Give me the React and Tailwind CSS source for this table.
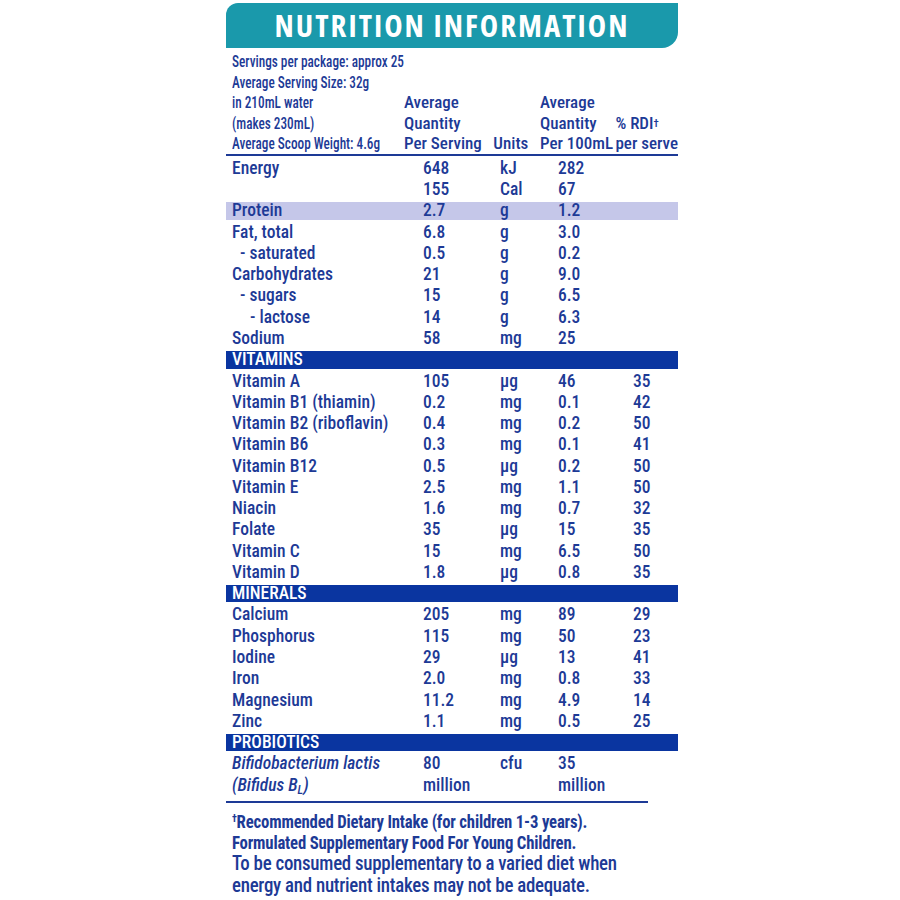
const rows1 = [
  ['Energy', '648', 'kJ', '282', ''],
  ['', '155', 'Cal', '67', ''],
  ['Protein', '2.7', 'g', '1.2', '', 'hl'],
  ['Fat, total', '6.8', 'g', '3.0', ''],
  ['- saturated', '0.5', 'g', '0.2', '', 1],
  ['Carbohydrates', '21', 'g', '9.0', ''],
  ['- sugars', '15', 'g', '6.5', '', 1],
  ['- lactose', '14', 'g', '6.3', '', 2],
  ['Sodium', '58', 'mg', '25', ''],
]

const vitamins = [
  ['Vitamin A', '105', 'µg', '46', '35'],
  ['Vitamin B1 (thiamin)', '0.2', 'mg', '0.1', '42'],
  ['Vitamin B2 (riboflavin)', '0.4', 'mg', '0.2', '50'],
  ['Vitamin B6', '0.3', 'mg', '0.1', '41'],
  ['Vitamin B12', '0.5', 'µg', '0.2', '50'],
  ['Vitamin E', '2.5', 'mg', '1.1', '50'],
  ['Niacin', '1.6', 'mg', '0.7', '32'],
  ['Folate', '35', 'µg', '15', '35'],
  ['Vitamin C', '15', 'mg', '6.5', '50'],
  ['Vitamin D', '1.8', 'µg', '0.8', '35'],
]

const minerals = [
  ['Calcium', '205', 'mg', '89', '29'],
  ['Phosphorus', '115', 'mg', '50', '23'],
  ['Iodine', '29', 'µg', '13', '41'],
  ['Iron', '2.0', 'mg', '0.8', '33'],
  ['Magnesium', '11.2', 'mg', '4.9', '14'],
  ['Zinc', '1.1', 'mg', '0.5', '25'],
]

const cols = 'grid grid-cols-[191px_77px_58px_75px_1fr] items-center h-full pl-[6px]'

function Row({ r }) {
  const [name, serve, unit, per100, rdi, flag] = r
  const indent = flag === 1 ? 'pl-[8px]' : flag === 2 ? 'pl-[18px]' : ''
  return (
    <div className="h-[21.28px] py-[2px]">
      <div className={`${cols} ${flag === 'hl' ? 'bg-[#c5c7e9]' : ''}`}>
        <span className={indent}>{name}</span>
        <span>{serve}</span>
        <span>{unit}</span>
        <span>{per100}</span>
        <span>{rdi}</span>
      </div>
    </div>
  )
}

function Band({ label }) {
  return (
    <div className="h-[21.28px] py-[2px]">
      <div className="h-full bg-[#0a35a0] text-white flex items-center pl-[6px]">{label}</div>
    </div>
  )
}

// the serving notes are set much tighter than the rest of the panel
function Squeezed({ children }) {
  return <div className="origin-left scale-x-[0.78]">{children}</div>
}

export default function App() {
  return (
    <div className="w-[900px] h-[900px] bg-white text-[#1d3a96] overflow-hidden font-['Roboto',sans-serif] [font-stretch:80%] font-medium">
      <div className="ml-[226px] w-[452px] flex flex-col text-[17.5px] leading-none">
        <div className="mt-[3px] h-[45px] bg-[#1a99ab] rounded-tl-[12px] rounded-br-[16px] flex items-center justify-center">
          <span className="text-white font-bold text-[31px] tracking-[2px] font-['Open_Sans',sans-serif]">
            NUTRITION INFORMATION
          </span>
        </div>

        <div className="flex items-end pl-[6px] pt-[3px] text-[17px] leading-[20.5px] whitespace-nowrap">
          <div className="w-[172px]">
            <Squeezed>Servings per package: approx 25</Squeezed>
            <Squeezed>Average Serving Size: 32g</Squeezed>
            <Squeezed>in 210mL water</Squeezed>
            <Squeezed>(makes 230mL)</Squeezed>
            <Squeezed>Average Scoop Weight: 4.6g</Squeezed>
          </div>
          <div className="w-[90px]">
            <div>Average</div>
            <div>Quantity</div>
            <div>Per Serving</div>
          </div>
          <div className="w-[47px]">Units</div>
          <div className="w-[76px]">
            <div>Average</div>
            <div>Quantity</div>
            <div>Per 100mL</div>
          </div>
          <div>
            <div>
              % RDI<sup className="text-[11px] relative -top-[2px]">†</sup>
            </div>
            <div>per serve</div>
          </div>
        </div>
        <div className="h-[2px] bg-[#1d3a96]" />

        <div className="pt-[2.4px]">
          {rows1.map((r, i) => (
            <Row key={'a' + i} r={r} />
          ))}
          <Band label="VITAMINS" />
          {vitamins.map((r, i) => (
            <Row key={'v' + i} r={r} />
          ))}
          <Band label="MINERALS" />
          {minerals.map((r, i) => (
            <Row key={'m' + i} r={r} />
          ))}
          <Band label="PROBIOTICS" />
          <div className="h-[21.28px] py-[2px]">
            <div className={cols}>
              <span className="italic">Bifidobacterium lactis</span>
              <span>80</span>
              <span>cfu</span>
              <span>35</span>
              <span />
            </div>
          </div>
          <div className="h-[21.28px] py-[2px]">
            <div className={cols}>
              <span className="italic">
                (Bifidus B<sub className="text-[12px]">L</sub>)
              </span>
              <span>million</span>
              <span />
              <span>million</span>
              <span />
            </div>
          </div>
        </div>

        <div className="mt-[5px] h-[2px] w-[422px] bg-[#1d3a96]" />

        <div className="pl-[6px] pt-[8px] whitespace-nowrap [font-stretch:75%]">
          <div className="font-bold text-[18px] leading-[21px] tracking-[-0.2px] origin-left scale-x-[0.93]">
            <div>
              <sup className="text-[11px]">†</sup>Recommended Dietary Intake (for children 1-3 years).
            </div>
            <div>Formulated Supplementary Food For Young Children.</div>
          </div>
          <div className="text-[21px] leading-[22px] -mt-[0.5px] tracking-[-0.3px] origin-left scale-x-[0.9]">
            <div>To be consumed supplementary to a varied diet when</div>
            <div>energy and nutrient intakes may not be adequate.</div>
          </div>
        </div>
      </div>
    </div>
  )
}
